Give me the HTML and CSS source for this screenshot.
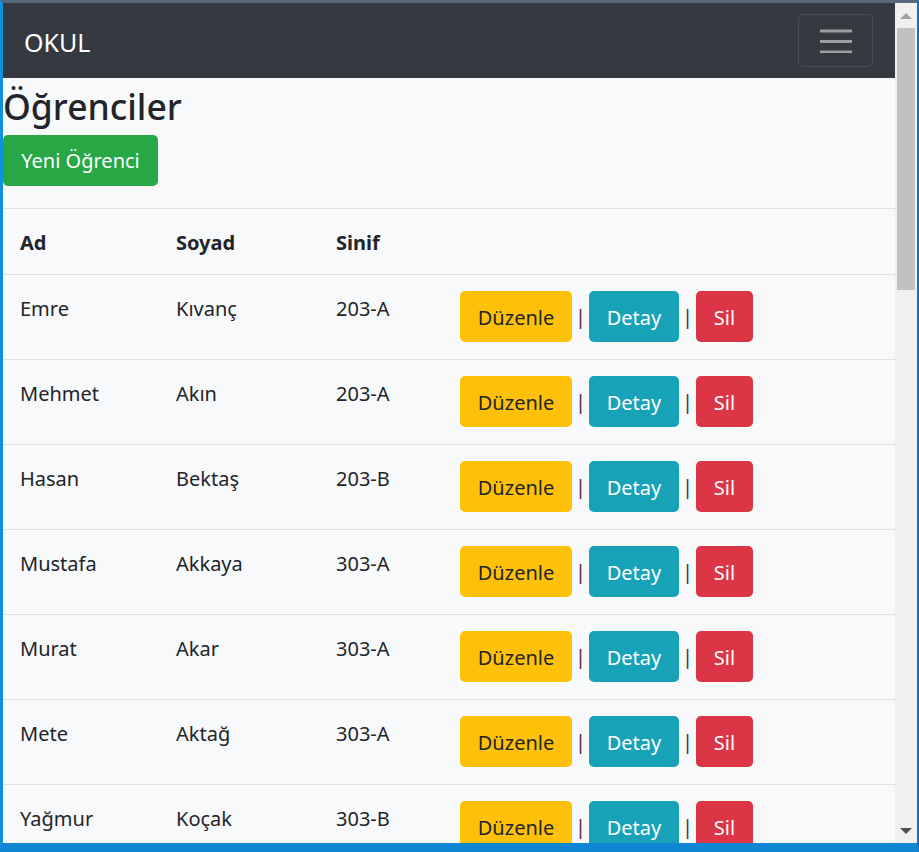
FILE: index.html
```html
<!DOCTYPE html>
<html lang="tr">
<head>
<meta charset="utf-8">
<title>OKUL</title>
<link rel="stylesheet" href="styles.css">
</head>
<body>
<div class="window">
  <div class="client">
    <div class="viewport">
      <nav class="navbar">
        <span class="brand">OKUL</span>
        <button class="toggler" aria-label="menu">
          <svg width="32" height="24" viewBox="0 0 32 24"><path d="M0 2h32M0 12.5h32M0 23h32" stroke="#9b9ea2" stroke-width="3"/></svg>
        </button>
      </nav>
      <main class="content">
        <h2 class="title">Öğrenciler</h2>
        <a class="btn btn-success btn-new">Yeni Öğrenci</a>
        <table class="table">
          <thead>
            <tr><th class="c1">Ad</th><th class="c2">Soyad</th><th class="c3">Sinif</th><th></th></tr>
          </thead>
          <tbody>
            <tr><td>Emre</td><td>Kıvanç</td><td>203-A</td><td class="actions"><a class="btn btn-warning">Düzenle</a><span class="sep sep-a">|</span><a class="btn btn-info">Detay</a><span class="sep sep-b">|</span><a class="btn btn-danger">Sil</a></td></tr>
            <tr><td>Mehmet</td><td>Akın</td><td>203-A</td><td class="actions"><a class="btn btn-warning">Düzenle</a><span class="sep sep-a">|</span><a class="btn btn-info">Detay</a><span class="sep sep-b">|</span><a class="btn btn-danger">Sil</a></td></tr>
            <tr><td>Hasan</td><td>Bektaş</td><td>203-B</td><td class="actions"><a class="btn btn-warning">Düzenle</a><span class="sep sep-a">|</span><a class="btn btn-info">Detay</a><span class="sep sep-b">|</span><a class="btn btn-danger">Sil</a></td></tr>
            <tr><td>Mustafa</td><td>Akkaya</td><td>303-A</td><td class="actions"><a class="btn btn-warning">Düzenle</a><span class="sep sep-a">|</span><a class="btn btn-info">Detay</a><span class="sep sep-b">|</span><a class="btn btn-danger">Sil</a></td></tr>
            <tr><td>Murat</td><td>Akar</td><td>303-A</td><td class="actions"><a class="btn btn-warning">Düzenle</a><span class="sep sep-a">|</span><a class="btn btn-info">Detay</a><span class="sep sep-b">|</span><a class="btn btn-danger">Sil</a></td></tr>
            <tr><td>Mete</td><td>Aktağ</td><td>303-A</td><td class="actions"><a class="btn btn-warning">Düzenle</a><span class="sep sep-a">|</span><a class="btn btn-info">Detay</a><span class="sep sep-b">|</span><a class="btn btn-danger">Sil</a></td></tr>
            <tr><td>Yağmur</td><td>Koçak</td><td>303-B</td><td class="actions"><a class="btn btn-warning">Düzenle</a><span class="sep sep-a">|</span><a class="btn btn-info">Detay</a><span class="sep sep-b">|</span><a class="btn btn-danger">Sil</a></td></tr>
          </tbody>
        </table>
      </main>
    </div>
    <div class="scrollbar">
      <div class="arrow up"></div>
      <div class="track"><div class="thumb"></div></div>
      <div class="arrow down"></div>
    </div>
  </div>
</div>
</body>
</html>
```
FILE: styles.css
```css
* { box-sizing: border-box; }
html, body { margin: 0; padding: 0; }
body {
  width: 919px;
  height: 852px;
  overflow: hidden;
  background: #0f86d2;
  font-family: "Noto Sans", "Open Sans", sans-serif;
}
.window {
  width: 919px;
  height: 852px;
  border-top: 3px solid #56687a;
  border-left: 3px solid #1191db;
  border-right: 2px solid #1a6fb8;
  border-bottom: 9px solid #0e86d3;
  display: flex;
  flex-direction: column;
}
.client {
  flex: 1;
  display: flex;
  min-height: 0;
}
.viewport {
  flex: 1;
  overflow: hidden;
  background: #f8f9fa;
  color: #212529;
  font-size: 20px;
  line-height: 32px;
}
.navbar {
  height: 75px;
  background: #343a40;
  display: flex;
  align-items: center;
  justify-content: space-between;
  padding: 0 22px 0 21px;
}
.brand {
  color: #fff;
  font-size: 25px;
  line-height: 1;
  padding-top: 3px;
}
.toggler {
  width: 75px;
  height: 53px;
  background: transparent;
  border: 1px solid rgba(255,255,255,.1);
  border-radius: 5px;
  display: flex;
  align-items: center;
  justify-content: center;
  padding: 0;
}
.content { padding: 0; }
.title {
  margin: 0;
  height: 57px;
  font-size: 35.5px;
  font-weight: 500;
  line-height: 50px;
  padding-top: 3px;
}
.btn {
  display: inline-block;
  height: 51px;
  padding: 2px 17px 0;
  border: 1px solid transparent;
  border-radius: 5px;
  line-height: 47px;
  font-size: 20px;
  text-align: center;
  color: #fff;
}
.btn-new { width: 155px; padding: 0; line-height: 49px; }
.btn-success { background: #28a745; }
.btn-warning { background: #ffc107; color: #212529; width: 112px; padding-left: 0; padding-right: 0; }
.btn-info { background: #17a2b8; width: 90px; padding-left: 0; padding-right: 0; }
.btn-danger { background: #dc3545; width: 57px; padding-left: 0; padding-right: 0; }
.table {
  margin-top: 22px;
  width: 100%;
  border-collapse: collapse;
}
.table th, .table td {
  padding: 18px 17px 14px;
  text-align: left;
  vertical-align: top;
  border-top: 1px solid #dee2e6;
  height: 84px;
}
.table thead th {
  font-weight: 700;
  height: 66px;
  border-bottom: 1px solid #dee2e6;
}
.c1 { width: 156px; }
.c2 { width: 160px; }
.c3 { width: 124px; }
.table td.actions {
  display: flex;
  align-items: flex-start;
  white-space: nowrap;
  border-top: none;
  padding-top: 16px;
}
.table tbody tr { border-top: 1px solid #dee2e6; }
.sep {
  display: inline-block;
  width: 17px;
  text-align: center;
  line-height: 51px;
}
.sep-a { color: #5a2a2e; }
.sep-b { color: #1f3f66; }
.scrollbar {
  width: 22px;
  background: #f0f0f0;
  display: flex;
  flex-direction: column;
}
.arrow {
  height: 25px;
  display: flex;
  align-items: center;
  justify-content: center;
}
.arrow.up::before {
  content: "";
  border-left: 6px solid transparent;
  border-right: 6px solid transparent;
  border-bottom: 6px solid #a3a3a3;
}
.arrow.down::before {
  content: "";
  border-left: 6px solid transparent;
  border-right: 6px solid transparent;
  border-top: 6px solid #505050;
}
.track {
  flex: 1;
  padding: 0 2px;
}
.thumb {
  height: 262px;
  background: #c1c1c1;
}
```
